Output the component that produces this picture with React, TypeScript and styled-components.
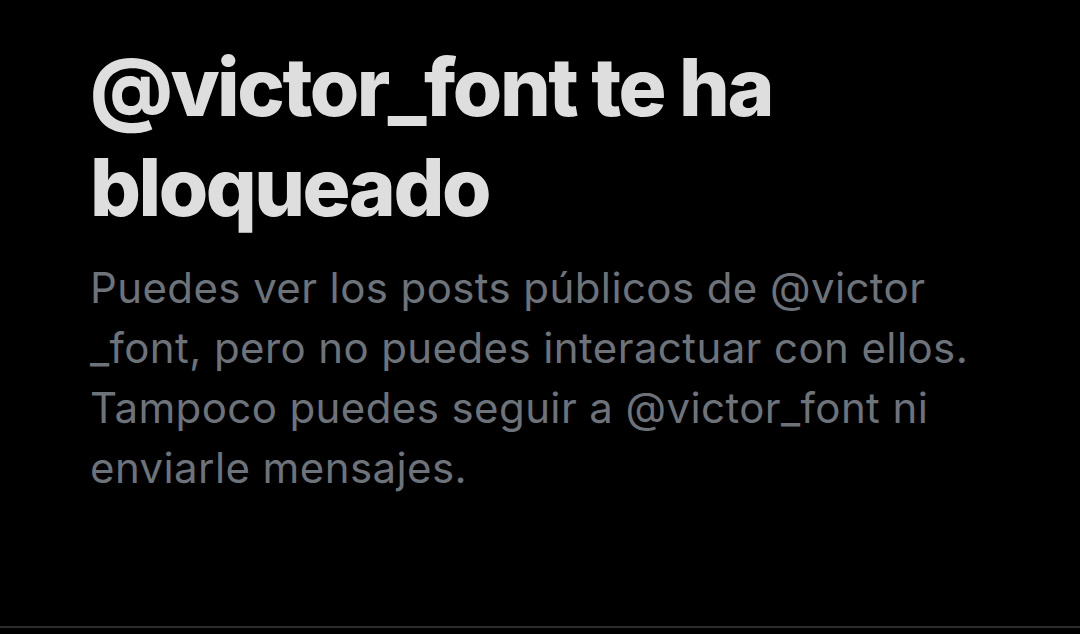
import React from 'react';
import styled, { createGlobalStyle } from 'styled-components';

const GlobalStyle = createGlobalStyle`
  html, body {
    margin: 0;
    padding: 0;
    background: #000000;
  }
  body {
    font-family: Inter, "Noto Sans", sans-serif;
  }
`

const App = () => {
  return (
    <>
      <GlobalStyle />
      <Page>
        <Content>
          <Title>
            @victor_font te ha bloqueado
          </Title>
          <Description>
            Puedes ver los posts públicos de @victor<wbr />_font, pero no puedes interactuar con ellos.
            Tampoco puedes seguir a @victor_font ni enviarle mensajes.
          </Description>
        </Content>
      </Page>
    </>
  )
}

export default App

const Page = styled.div`
  width: 100vw;
  height: 628px;
  box-sizing: border-box;
  background-color: #000000;
  border-bottom: 2px solid #2b2d2f;
  display: flex;
`

const Content = styled.div`
  width: 940px;
  padding: 37px 0 0 90px;
  display: flex;
  flex-direction: column;
`

const Title = styled.h1`
  margin: 0;
  font-size: 80px;
  line-height: 100px;
  font-weight: 800;
  letter-spacing: -2.5px;
  color: #dedede;
  width: 720px;
`

const Description = styled.p`
  margin: 21px 0 0;
  font-size: 42px;
  line-height: 60px;
  font-weight: 400;
  letter-spacing: 0.4px;
  color: #6e737a;
  width: 920px;
`
